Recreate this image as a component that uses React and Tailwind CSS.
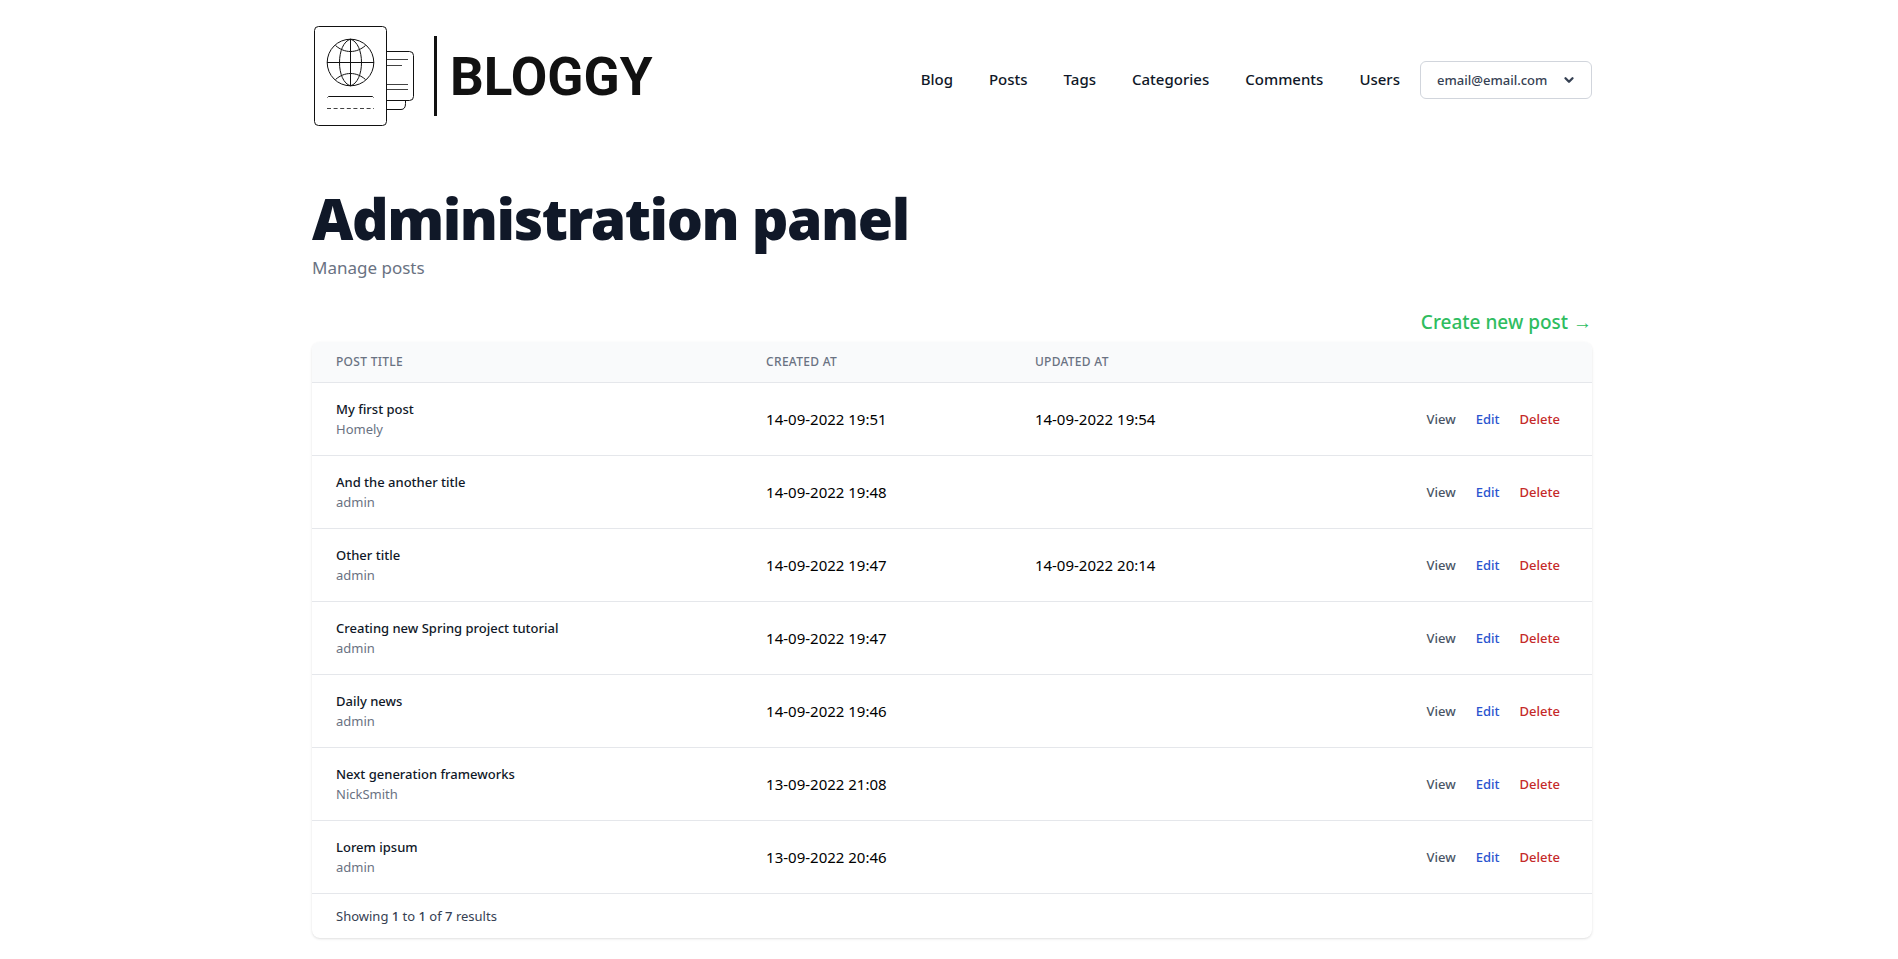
import { ChevronDown } from 'lucide-react';

const navItems = ['Blog', 'Posts', 'Tags', 'Categories', 'Comments', 'Users'];

const posts = [
  { title: 'My first post', author: 'Homely', created: '14-09-2022 19:51', updated: '14-09-2022 19:54' },
  { title: 'And the another title', author: 'admin', created: '14-09-2022 19:48', updated: '' },
  { title: 'Other title', author: 'admin', created: '14-09-2022 19:47', updated: '14-09-2022 20:14' },
  { title: 'Creating new Spring project tutorial', author: 'admin', created: '14-09-2022 19:47', updated: '' },
  { title: 'Daily news', author: 'admin', created: '14-09-2022 19:46', updated: '' },
  { title: 'Next generation frameworks', author: 'NickSmith', created: '13-09-2022 21:08', updated: '' },
  { title: 'Lorem ipsum', author: 'admin', created: '13-09-2022 20:46', updated: '' },
];

function Logo() {
  return (
    <svg viewBox="0 0 350 160" className="h-40 w-[350px]" role="img" aria-label="Bloggy">
      <g fill="none" stroke="#111" strokeWidth="1">
        <rect x="2.5" y="26.5" width="72" height="99" rx="4" />
        <circle cx="38.5" cy="62.5" r="23.3" />
        <path d="M38.5 39v47M15 62.5h47" />
        <path d="M38.5 39.2c-7 2-11 12-11 23.3s4 21.3 11 23.3M38.5 39.2c7 2 11 12 11 23.3s-4 21.3-11 23.3" />
        <path d="M23.5 45.5c9 8 21 8 30 0M23.5 79.5c9-8 21-8 30 0" />
        <path d="M15.5 97.5l1-1h44l1 1" />
        <path d="M15 108.5h47" strokeDasharray="4 2.6" strokeWidth=".8" />
        <path d="M75 51.5h22.500q4 0 4 4v41q0 4-4 4H75" />
        <path d="M75 59.5h21M75 65.5h15M75 84.5h21M75 89.5h21" strokeWidth=".8" />
        <path d="M75 109.5h14q4.500 0 4.500-6v-2.500" />
      </g>
      <rect x="122" y="36" width="3" height="80" fill="#111" />
      <text x="138" y="95" fill="#111" className="font-[Roboto,sans-serif] text-[53px] font-bold">
        BLOGGY
      </text>
    </svg>
  );
}

function Header() {
  return (
    <header className="flex h-40 items-center justify-between">
      <a href="#home">
        <Logo />
      </a>
      <div className="flex items-center gap-5">
        <nav className="flex items-center gap-9 pb-0.5">
          {navItems.map((item) => (
            <a key={item} href={`#${item.toLowerCase()}`} className="text-[15px] leading-6 font-medium text-gray-900">
              {item}
            </a>
          ))}
        </nav>
        <button
          type="button"
          className="flex w-43 items-center justify-between rounded-md border border-gray-300 bg-white px-4 py-2 text-[13px] leading-5 font-medium text-gray-700"
        >
          email@email.com
          <ChevronDown className="-mr-1 size-5 p-[3px]" strokeWidth={4} />
        </button>
      </div>
    </header>
  );
}

function PostRow({ post }) {
  return (
    <tr className="border-t border-gray-200">
      <td className="px-6 py-4 text-[13px] leading-5">
        <div className="font-medium text-gray-900">{post.title}</div>
        <div className="text-gray-500">{post.author}</div>
      </td>
      <td className="px-6 py-4 text-[15px] leading-6 text-black">{post.created}</td>
      <td className="px-6 py-4 text-[15px] leading-6 text-black">{post.updated}</td>
      <td className="py-4 pr-8 pl-6">
        <div className="flex justify-end gap-5 text-[13px] leading-5 font-medium">
          <a href="#view" className="text-gray-600">View</a>
          <a href="#edit" className="text-[#2a55cf]">Edit</a>
          <a href="#delete" className="text-[#c52a2a]">Delete</a>
        </div>
      </td>
    </tr>
  );
}

export default function App() {
  return (
    <div className="min-h-screen bg-white pl-[6px] font-['Noto_Sans',sans-serif]">
      <div className="mx-auto max-w-7xl">
        <Header />
        <main className="pt-7">
          <h1 className="text-[57px] leading-[60px] font-black tracking-tight text-gray-900">Administration panel</h1>
          <p className="mt-2 text-[17px] leading-6 text-gray-500">Manage posts</p>
          <div className="mt-7 flex justify-end">
            <a href="#create" className="text-[19px] leading-7 font-medium text-[#2fbd5f]">
              Create new post →
            </a>
          </div>
          <section className="mt-1.5 overflow-hidden rounded-lg bg-white shadow">
            <table className="w-full table-fixed border-collapse text-left">
              <thead className="bg-gray-50 text-[12px] leading-4 tracking-wide text-gray-500 uppercase">
                <tr>
                  <th scope="col" className="w-[33.6%] px-6 py-3 font-medium">Post title</th>
                  <th scope="col" className="w-[21%] px-6 py-3 font-medium">Created at</th>
                  <th scope="col" className="px-6 py-3 font-medium">Updated at</th>
                  <th scope="col" className="px-6 py-3" aria-label="Actions" />
                </tr>
              </thead>
              <tbody>
                {posts.map((post) => (
                  <PostRow key={post.title} post={post} />
                ))}
              </tbody>
            </table>
            <p className="border-t border-gray-200 px-6 py-3 text-[13px] leading-5 text-gray-700">
              Showing <span className="font-medium">1</span> to <span className="font-medium">1</span> of{' '}
              <span className="font-medium">7</span> results
            </p>
          </section>
        </main>
      </div>
    </div>
  );
}
